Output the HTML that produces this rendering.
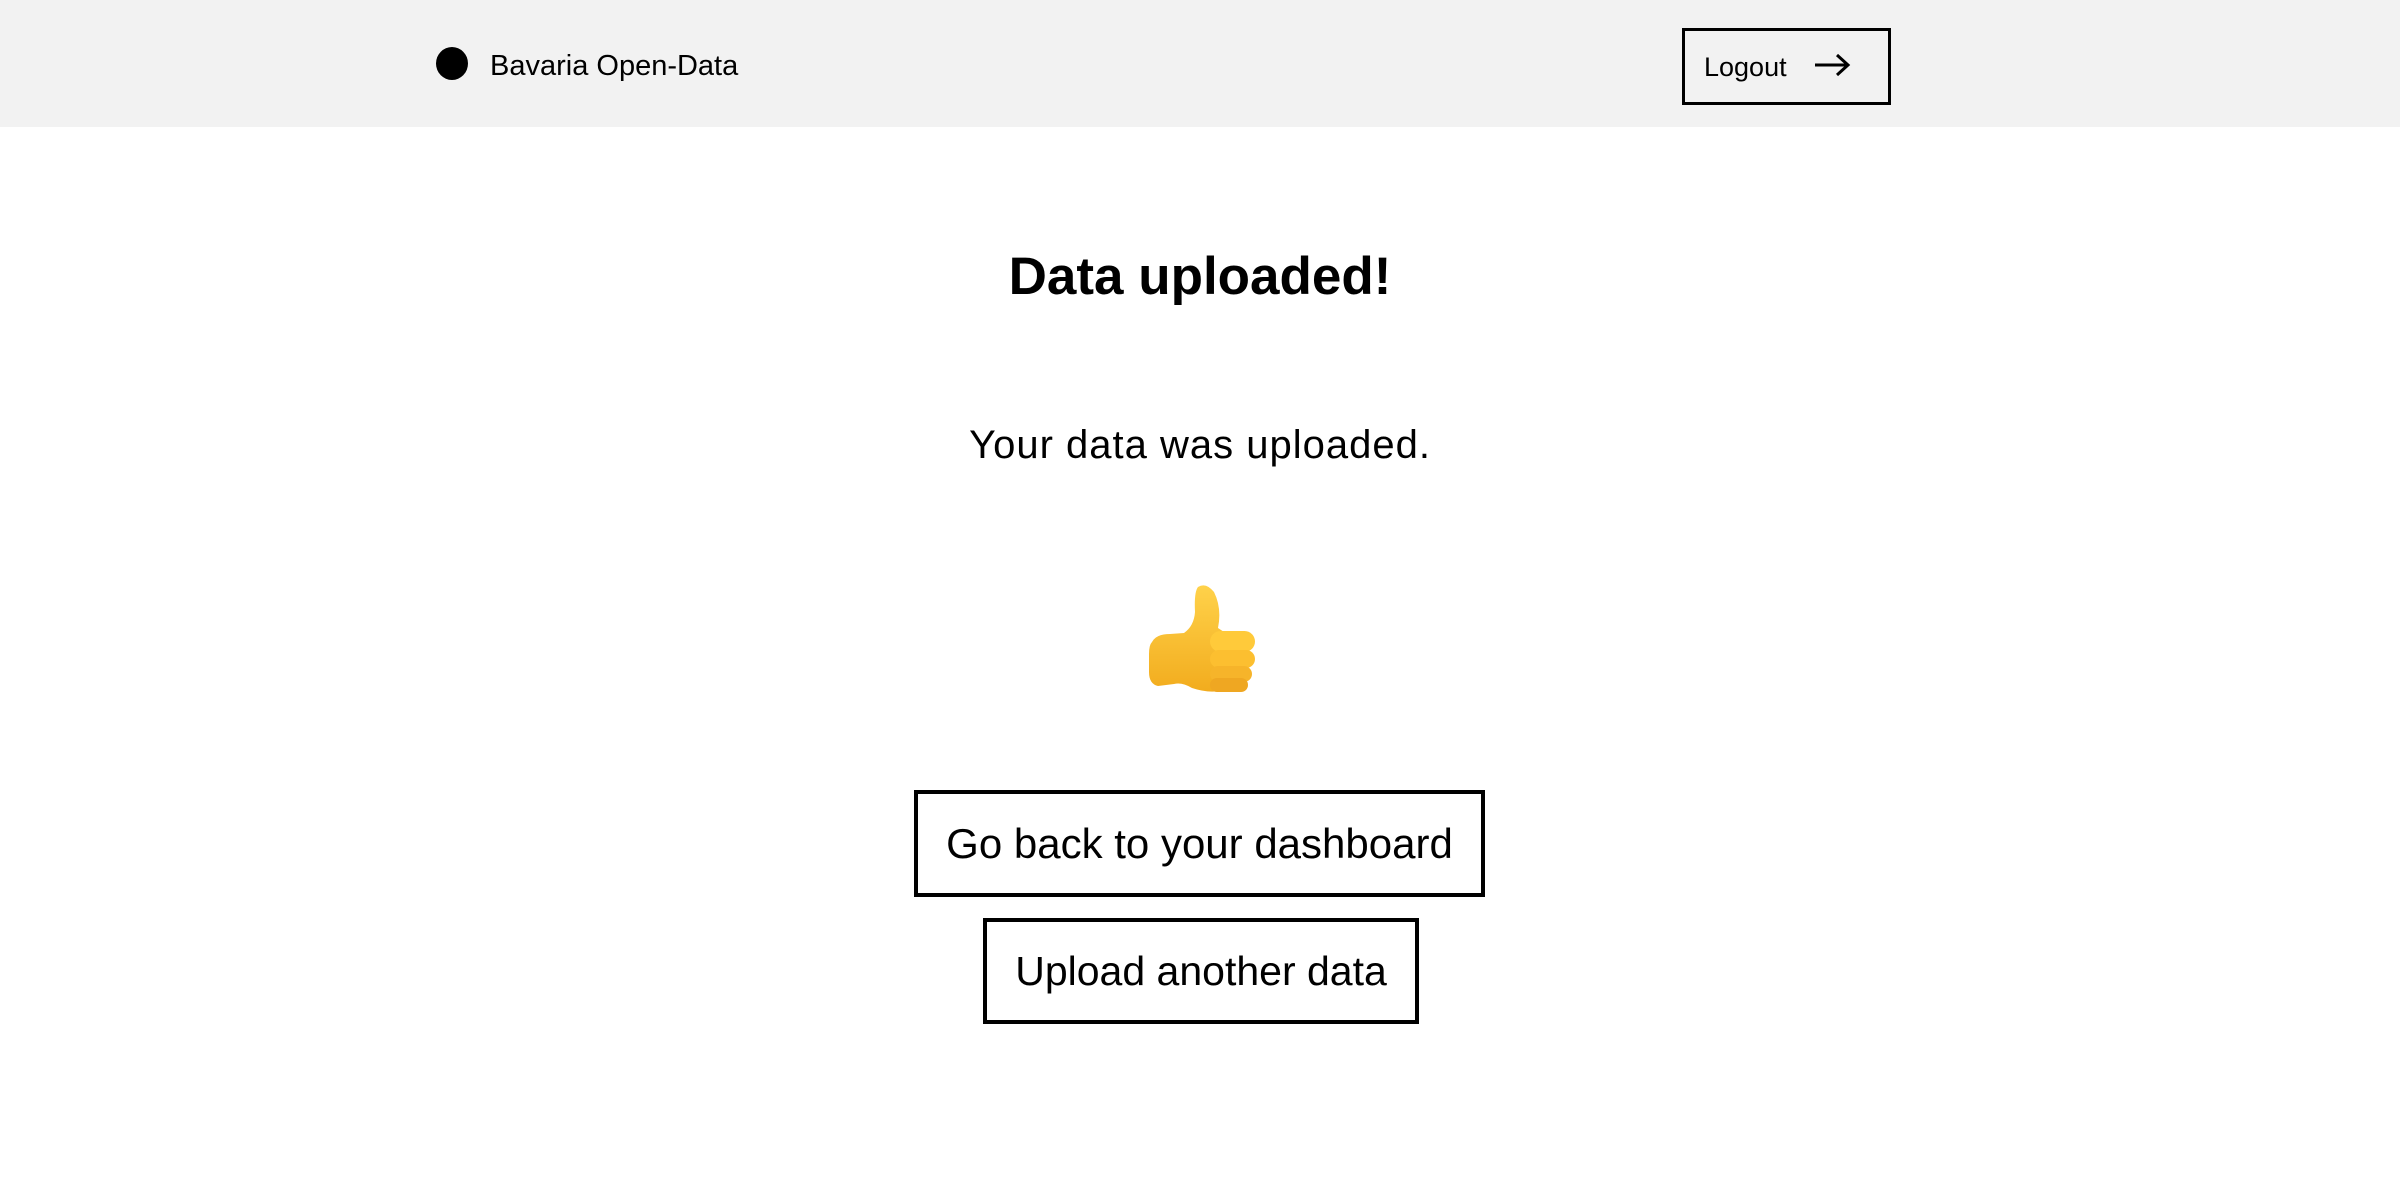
<!DOCTYPE html>
<html><head><meta charset="utf-8"><style>
html,body{margin:0;padding:0;width:2400px;height:1200px;background:#fff;overflow:hidden;font-family:"Liberation Sans",sans-serif;color:#000}
.hdr{position:absolute;left:0;top:0;width:2400px;height:127px;background:#f2f2f2}
.dot{position:absolute;left:436px;top:47px;width:32px;height:33px;border-radius:50%;background:#000}
.brand{position:absolute;left:490px;top:49px;font-size:29px;line-height:34px;white-space:nowrap}
.logout{position:absolute;left:1682px;top:28px;width:203px;height:71px;border:3px solid #000;box-sizing:content-box}
.logout span{position:absolute;left:19px;top:20px;font-size:27px;line-height:32px}
.logout svg{position:absolute;left:127px;top:19px}
.t{position:absolute;left:0;width:2400px;text-align:center;white-space:nowrap}
.btn{position:absolute;border:4px solid #000;box-sizing:border-box;text-align:center;white-space:nowrap}
</style></head><body>
<div class="hdr">
<div class="dot"></div>
<div class="brand">Bavaria Open-Data</div>
<div class="logout"><span>Logout</span>
<svg width="40" height="30" viewBox="0 0 40 30"><path d="M3 15H36M25 5L36 15L25 25" fill="none" stroke="#000" stroke-width="3"/></svg></div>
</div>
<div class="t" style="top:245px;font-size:53px;font-weight:bold;line-height:64px">Data uploaded!</div>
<div class="t" style="top:422px;font-size:40px;letter-spacing:1px;line-height:46px">Your data was uploaded.</div>
<svg style="position:absolute;left:1130px;top:570px" width="140" height="140" viewBox="0 0 140 140">
<defs><linearGradient id="g" x1="0" y1="0" x2="0" y2="1"><stop offset="0" stop-color="#ffd24a"/><stop offset="1" stop-color="#f2ac1e"/></linearGradient></defs>
<path d="M22 72 Q26 64 40 64 L54 63 Q64 56 65 42 Q64 22 68 17 Q76 12 84 22 Q92 38 88 58 L94 62 L94 120 Q80 124 62 118 Q52 112 44 114 L28 116 Q19 114 19 102 L19 84 Q19 75 22 72 Z" fill="url(#g)"/>
<rect x="80" y="61" width="45" height="21" rx="10.5" fill="#ffca3a"/>
<rect x="80" y="80" width="45" height="18" rx="9" fill="#fcbf30"/>
<rect x="80" y="96" width="42" height="16" rx="8" fill="#f6b42a"/>
<rect x="80" y="108" width="38" height="14" rx="7" fill="#efa722"/>
</svg>
<div class="btn" style="left:914px;top:790px;width:571px;height:107px;line-height:99px;font-size:42px">Go back to your dashboard</div>
<div class="btn" style="left:983px;top:918px;width:436px;height:106px;line-height:98px;font-size:41px">Upload another data</div>
</body></html>
